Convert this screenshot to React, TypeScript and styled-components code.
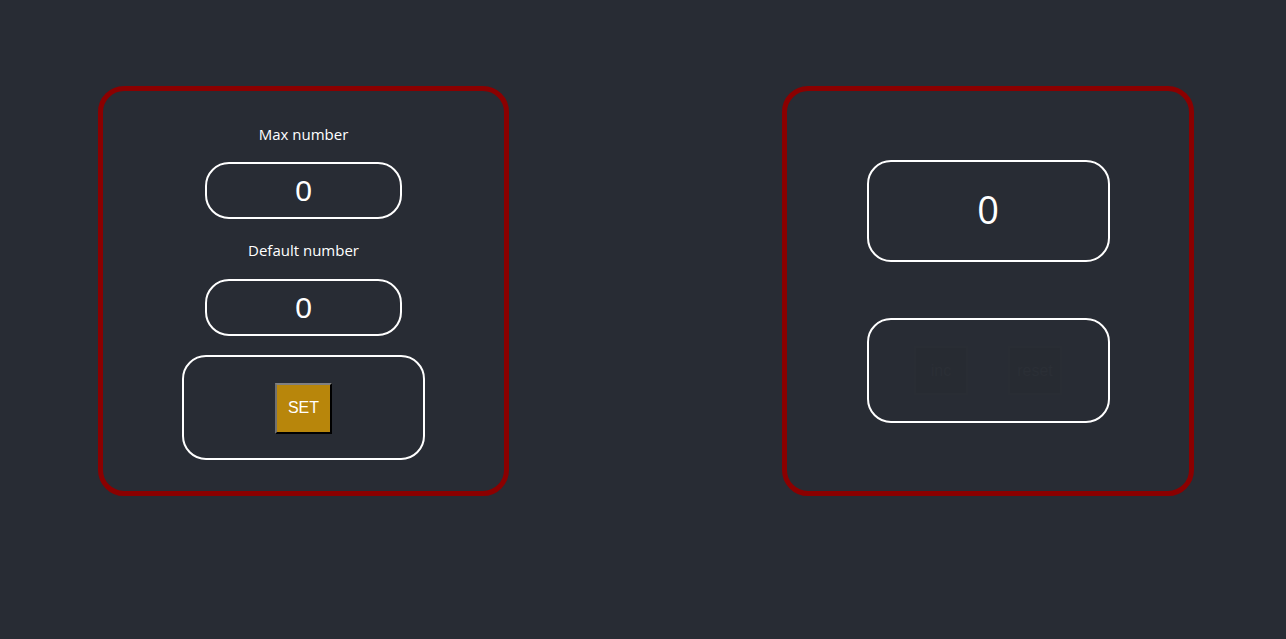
import React from "react";
import styled, { createGlobalStyle } from "styled-components";

const GlobalStyle = createGlobalStyle`
  html, body {
    margin: 0;
    padding: 0;
    background: #282c34;
    height: 100%;
  }
  body {
    font-family: "Open Sans", "Noto Sans", sans-serif;
    color: #ffffff;
    overflow: hidden;
  }
`;

const Page = styled.div`
  display: flex;
  align-items: flex-start;
  gap: 273px;
  padding: 86px 0 0 98px;
  min-height: 639px;
  box-sizing: border-box;
  background: #282c34;
`;

const Panel = styled.div<{ $width: number }>`
  width: ${(p) => p.$width}px;
  height: 410px;
  box-sizing: border-box;
  border: 5px solid #8b0000;
  border-radius: 26px;
  display: flex;
  flex-direction: column;
  align-items: center;
`;

const Label = styled.div<{ $top: number }>`
  margin-top: ${(p) => p.$top}px;
  font-family: "Open Sans", "Noto Sans", sans-serif;
  font-size: 15px;
  line-height: 20px;
  color: #ffffff;
`;

const NumberInput = styled.input<{ $top: number }>`
  margin-top: ${(p) => p.$top}px;
  width: 197px;
  height: 57px;
  box-sizing: border-box;
  border: 2px solid #ffffff;
  border-radius: 24px;
  background: transparent;
  color: #ffffff;
  font-family: "Liberation Sans", Arial, sans-serif;
  font-size: 30px;
  text-align: center;
  outline: none;
  padding: 0;
`;

const Frame = styled.div<{ $top: number; $height: number }>`
  margin-top: ${(p) => p.$top}px;
  width: 243px;
  height: ${(p) => p.$height}px;
  box-sizing: border-box;
  border: 2px solid #ffffff;
  border-radius: 24px;
  display: flex;
  align-items: center;
  justify-content: center;
  gap: 40px;
`;

const SetButton = styled.button`
  width: 57px;
  height: 51px;
  box-sizing: border-box;
  background: #b8860b;
  border: 2px outset #767676;
  border-top-color: #808080;
  border-left-color: #707070;
  border-right-color: #3a3a3a;
  border-bottom-color: #3a3a3a;
  color: #ffffff;
  font-family: "Liberation Sans", Arial, sans-serif;
  font-size: 16px;
  padding: 0;
  margin-top: 1px;
`;

const GhostButton = styled.button`
  width: 54px;
  height: 49px;
  box-sizing: border-box;
  background: #272b32;
  border: 2px solid #292d34;
  color: #2b2f36;
  font-family: "Liberation Sans", Arial, sans-serif;
  font-size: 16px;
  padding: 0;
`;

const Display = styled.div`
  margin-top: 69px;
  width: 243px;
  height: 102px;
  box-sizing: border-box;
  border: 2px solid #ffffff;
  border-radius: 24px;
  display: flex;
  align-items: center;
  justify-content: center;
  font-family: "Open Sans", "Noto Sans", sans-serif;
  font-size: 38px;
  line-height: 1;
  padding-bottom: 4px;
  color: #ffffff;
`;

export default function App() {
  return (
    <>
      <GlobalStyle />
      <Page>
        <Panel $width={411}>
          <Label $top={33}>Max number</Label>
          <NumberInput $top={18} type="text" defaultValue="0" />
          <Label $top={21}>Default number</Label>
          <NumberInput $top={19} type="text" defaultValue="0" />
          <Frame $top={19} $height={105}>
            <SetButton>SET</SetButton>
          </Frame>
        </Panel>
        <Panel $width={412}>
          <Display>0</Display>
          <Frame $top={56} $height={105}>
            <GhostButton disabled>inc</GhostButton>
            <GhostButton disabled>reset</GhostButton>
          </Frame>
        </Panel>
      </Page>
    </>
  );
}
